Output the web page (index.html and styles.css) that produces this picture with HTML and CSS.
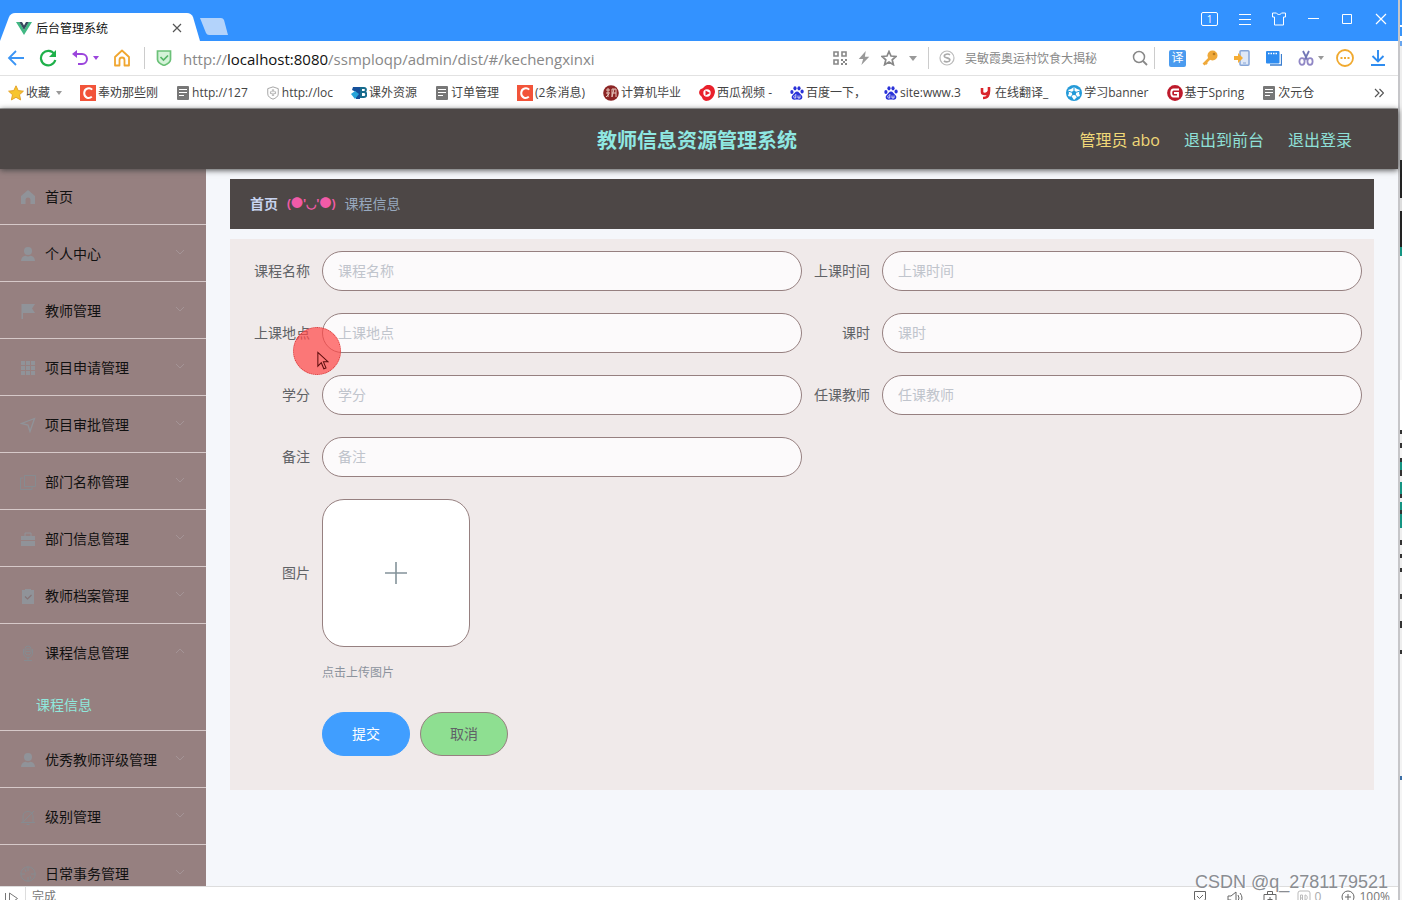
FILE: index.html
```html
<!DOCTYPE html>
<html lang="zh-CN">
<head>
<meta charset="utf-8">
<title>后台管理系统</title>
<link rel="stylesheet" href="styles.css">
</head>
<body>
<svg class="defs" aria-hidden="true">
  <symbol id="doc" viewBox="0 0 12 14"><rect width="12" height="14" rx="1" fill="#777"/><path d="M2 3.500h8M2 6.500h8M2 9.500h5" stroke="#fff" stroke-width="1.200"/></symbol>
  <symbol id="csdn" viewBox="0 0 16 16"><rect width="16" height="16" fill="#f2543a"/><path d="M12.200 4.600C10 2.400 4.500 2.600 4.200 8c0 5.200 5 6.200 7.600 3.600" fill="none" stroke="#fff" stroke-width="2"/></symbol>
  <symbol id="paw" viewBox="0 0 14 14"><g fill="#2a32d8"><ellipse cx="1.900" cy="6" rx="1.600" ry="2"/><ellipse cx="5" cy="2.300" rx="1.600" ry="2.100"/><ellipse cx="9" cy="2.300" rx="1.600" ry="2.100"/><ellipse cx="12.100" cy="5.600" rx="1.600" ry="2"/><path d="M7 5.500c2 0 2.500 2 4.300 3.500 2.200 2 .7 5-1.800 4.700-2-.3-3-.3-5 0C2 14 .6 11 2.700 9 4.500 7.500 5 5.500 7 5.500z"/></g><path d="M4.500 9.500c-1 0-1 2.500 0 2.500h1.300V8M8 9.500v2.500h2V9.500" fill="none" stroke="#fff" stroke-width=".8"/></symbol>
  <symbol id="down" viewBox="0 0 10 6"><path d="M1 1l4 4 4-4" fill="none" stroke="currentColor"/></symbol>
  <symbol id="up" viewBox="0 0 10 6"><path d="M1 5l4-4 4 4" fill="none" stroke="currentColor"/></symbol>
  <symbol id="user" viewBox="0 0 16 16"><circle cx="8" cy="5" r="4" fill="currentColor"/><path d="M1 15c0-3 2-5 4.500-5.200 1.500 1 3.500 1 5 0C13 10 15 12 15 15z" fill="currentColor"/></symbol>
</svg>
<div class="desktop">
<div class="browser">
  <div class="titlebar">
    <div class="tab">
      <svg class="tab-shape" viewBox="0 0 200 28" preserveAspectRatio="none"><path d="M0 28L9 4Q11 0 15 0H187Q191 0 193 4L200 28z" fill="#fff"/></svg>
      <svg class="i16" viewBox="0 0 16 14"><path d="M0 1h3.500L8 9l4.500-8H16L8 14z" fill="#41b883"/><path d="M3.300 1H6l2 3.500L10 1h2.700L8 9z" fill="#35495e"/></svg>
      <span>后台管理系统</span>
      <button class="icon-btn close" aria-label="关闭标签"><svg class="i10" viewBox="0 0 10 10"><path d="M1 1l8 8M9 1L1 9" stroke="#555" stroke-width="1.200"/></svg></button>
    </div>
    <button class="icon-btn" aria-label="新标签"><svg class="newtab" viewBox="0 0 28 17"><path d="M2 0h19q2 0 3 2l4 15H9q-2 0-3-2L0 0z" fill="#b3d3fb"/></svg></button>
    <div class="window-controls">
      <button class="icon-btn count" aria-label="窗口数">1</button>
      <button class="icon-btn" aria-label="菜单"><svg class="i14" viewBox="0 0 14 14"><path d="M1 2.500h12M1 7.500h12M1 12.500h12" stroke="#fff"/></svg></button>
      <button class="icon-btn" aria-label="皮肤"><svg class="i14" viewBox="0 0 14 14"><path d="M4.500 1H.5v4h2v8h9V5h2V1h-4C8.500 3 5.500 3 4.500 1z" fill="none" stroke="#fff"/></svg></button>
      <button class="icon-btn" aria-label="最小化"><svg class="i14" viewBox="0 0 14 14"><path d="M2 6.500h11" stroke="#fff"/></svg></button>
      <button class="icon-btn" aria-label="最大化"><svg class="i14" viewBox="0 0 14 14"><path d="M2.500 2.500h9v9h-9z" fill="none" stroke="#fff"/></svg></button>
      <button class="icon-btn" aria-label="关闭"><svg class="i14" viewBox="0 0 14 14"><path d="M2 2l10 10M12 2L2 12" stroke="#fff" stroke-width="1.200"/></svg></button>
    </div>
  </div>

  <div class="toolbar">
    <div class="nav">
      <button class="icon-btn" aria-label="后退"><svg class="i18" viewBox="0 0 18 18"><path d="M9 2L2 9l7 7M2 9h15" fill="none" stroke="#3b95f5" stroke-width="1.800"/></svg></button>
      <button class="icon-btn" aria-label="刷新"><svg class="i18" viewBox="0 0 18 18"><path d="M15.300 5A7.300 7.300 0 1 0 16.300 11" fill="none" stroke="#1fb04a" stroke-width="2.200"/><path d="M17 1v7h-7z" fill="#1fb04a"/></svg></button>
      <button class="icon-btn undo" aria-label="撤销"><svg class="i18" viewBox="0 0 18 18"><path d="M3 5h8a5 5 0 0 1 0 10H7" fill="none" stroke="#9b45dc" stroke-width="2"/><path d="M1 5l5-4v8z" fill="#9b45dc"/></svg><svg class="i6" viewBox="0 0 6 4"><path d="M0 0h6L3 4z" fill="#9b45dc"/></svg></button>
      <button class="icon-btn" aria-label="主页"><svg class="i18" viewBox="0 0 18 18"><path d="M2 8l7-6.500L16 8v8.500h-4.500V11a2.500 2.500 0 0 0-5 0v5.500H2z" fill="none" stroke="#f0a630" stroke-width="1.800" stroke-linejoin="round"/></svg></button>
    </div>
    <svg class="i16 shield" viewBox="0 0 16 16"><path d="M1.500 1h13v8.500c0 3-3 4.500-6.500 6-3.500-1.500-6.500-3-6.500-6z" fill="#d5f3d9" stroke="#6bc178" stroke-width="1.700"/><path d="M4.500 7L7.500 10l4.500-4.500" fill="none" stroke="#55b566" stroke-width="1.700"/></svg>
    <div class="url">http://<b>localhost:8080</b>/ssmploqp/admin/dist/#/kechengxinxi</div>
    <div class="url-tools">
      <button class="icon-btn" aria-label="二维码"><svg class="i14" viewBox="0 0 14 14"><path d="M1 1h4v4H1zM9 1h4v4H9zM1 9h4v4H1z" fill="none" stroke="#888" stroke-width="1.600"/><path d="M8 8h2v2H8zM12 8h2v2h-2zM10 10h2v2h-2zM8 12h2v2H8zM12 12h2v2h-2z" fill="#888"/></svg></button>
      <button class="icon-btn" aria-label="极速"><svg class="i14" viewBox="0 0 14 16"><path d="M9 0L1 9h5l-2 7 9-9.500H8z" fill="#999"/></svg></button>
      <button class="icon-btn" aria-label="收藏网页"><svg class="i16" viewBox="0 0 16 16"><path d="M8 1.500l2 4.500 5 .5-3.800 3.300 1.200 4.900L8 12.100l-4.400 2.600 1.200-4.900L1 6.500 6 6z" fill="none" stroke="#888" stroke-width="1.700"/></svg></button>
      <button class="icon-btn" aria-label="更多"><svg class="i8" viewBox="0 0 8 5"><path d="M0 0h8L4 5z" fill="#999"/></svg></button>
    </div>
    <label class="search">
      <svg class="i16" viewBox="0 0 16 16"><circle cx="8" cy="8" r="7" fill="none" stroke="#bbb" stroke-width="1.200"/><path d="M11 4.800C9 3.400 5 4 5.300 6.300 5.600 8.300 11 7.500 10.900 10c-.2 2-4 2.500-6 1" fill="none" stroke="#aaa" stroke-width="1.600"/></svg>
      <input type="text" aria-label="搜索" placeholder="吴敏霞奥运村饮食大揭秘">
      <svg class="i16" viewBox="0 0 16 16"><circle cx="7" cy="7" r="5.500" fill="none" stroke="#888" stroke-width="1.500"/><path d="M11 11l4 4" stroke="#888" stroke-width="1.800"/></svg>
    </label>
    <div class="extensions">
      <button class="icon-btn translate" aria-label="翻译">译</button>
      <button class="icon-btn" aria-label="密码"><svg class="i16" viewBox="0 0 16 16"><path d="M9 7l-7.500 7.500M3 12l2 2" stroke="#efa93a" stroke-width="2.600"/><circle cx="10.500" cy="5.500" r="5" fill="#efa93a"/><circle cx="12" cy="4" r="1.300" fill="#b97a1f"/></svg></button>
      <button class="icon-btn" aria-label="手机"><svg class="i16" viewBox="0 0 16 16"><rect x="6" y=".8" width="9" height="14.400" rx="1" fill="#dfe8f7" stroke="#86a5d8" stroke-width="1.500"/><path d="M9 13h3" stroke="#86a5d8"/><path d="M0 6h4V3l5 5-5 5v-3H0z" fill="#f5ad35"/></svg></button>
      <button class="icon-btn" aria-label="窗口"><svg class="i16" viewBox="0 0 16 16"><path d="M4 15h11.500V4" fill="none" stroke="#3b7fd0" stroke-width="1.300"/><rect y="1" width="13.500" height="12.500" rx="1" fill="#2e8cf0"/><path d="M2 3.500h9" stroke="#fff" stroke-width="1.300" stroke-dasharray="1.500 1"/></svg></button>
      <button class="icon-btn snip" aria-label="截图"><svg class="i16" viewBox="0 0 16 16"><path d="M5 1l4.500 9M11 1L6.500 10" stroke="#7277b5" stroke-width="1.800"/><ellipse cx="4" cy="11.500" rx="2.600" ry="3.300" fill="none" stroke="#9087c5" stroke-width="1.800"/><ellipse cx="12" cy="11.500" rx="2.600" ry="3.300" fill="none" stroke="#9087c5" stroke-width="1.800"/></svg><svg class="i6" viewBox="0 0 6 4"><path d="M0 0h6L3 4z" fill="#999"/></svg></button>
      <button class="icon-btn" aria-label="更多扩展"><svg class="i18" viewBox="0 0 18 18"><circle cx="9" cy="9" r="8" fill="none" stroke="#f0a92e" stroke-width="1.800"/><path d="M4.500 9h2M8 9h2M11.500 9h2" stroke="#f0a92e" stroke-width="2"/></svg></button>
      <button class="icon-btn" aria-label="下载"><svg class="i16" viewBox="0 0 16 16"><path d="M8 0v11M2.500 6L8 11.500 13.500 6M1 15h14" fill="none" stroke="#2e8cf0" stroke-width="1.900"/></svg></button>
    </div>
  </div>

  <nav class="bookmarks" aria-label="书签">
    <a href="#"><svg class="i16" viewBox="0 0 16 16"><path d="M8 .8l2.200 4.800 5.200.6-3.900 3.500 1.100 5.200L8 12.300l-4.600 2.600 1.100-5.200L.6 6.200l5.200-.6z" fill="#f7c52e" stroke="#e4a32a"/></svg>收藏<svg class="i6 caret" viewBox="0 0 6 4"><path d="M0 0h6L3 4z" fill="#999"/></svg></a>
    <a href="#"><svg class="i16"><use href="#csdn"/></svg>奉劝那些刚</a>
    <a href="#"><svg class="i14"><use href="#doc"/></svg>http://127</a>
    <a href="#"><svg class="i14" viewBox="0 0 14 16"><path d="M7 1l6 2v6c0 3-3 5-6 6-3-1-6-3-6-6V3z" fill="none" stroke="#999"/><path d="M7 4v7M3.500 7.500h7" stroke="#aaa" stroke-width="2.600"/><path d="M7 5v5M4.500 7.500h5" stroke="#fff"/></svg>http://loc</a>
    <a href="#"><svg class="i16" viewBox="0 0 16 16"><path d="M2 2h7v12H5V7L1 5z" fill="#15509b"/><path d="M0 9l4-3 4 3-4 5z" fill="#27a4d9"/><path d="M10 3h3c3 0 2 4 0 4h-2 2c3 0 3 5 0 5h-3z" fill="none" stroke="#176b8c" stroke-width="2"/></svg>课外资源</a>
    <a href="#"><svg class="i14"><use href="#doc"/></svg>订单管理</a>
    <a href="#"><svg class="i16"><use href="#csdn"/></svg>(2条消息)</a>
    <a href="#"><svg class="i16" viewBox="0 0 16 16"><circle cx="8" cy="8" r="7.800" fill="#8c2525"/><path d="M3 5h4M5 3v9M3 8h4M3 12l3-3M9 4h4v8M9 4v8M9 8h4M11 4l-2 8" fill="none" stroke="#e6c7bd"/></svg>计算机毕业</a>
    <a href="#"><svg class="i16" viewBox="0 0 16 16"><path d="M8 0c5-1 8 3 8 7-1 6-5 9-9 9-4-1-3-3-5-5-3-2-2-6 0-7 2 0 3-3 6-4z" fill="#e9212b"/><circle cx="8" cy="8" r="3.700" fill="#fff"/><path d="M6.500 5.500L11 8l-4.500 2.500z" fill="#e9212b"/></svg>西瓜视频 -</a>
    <a href="#"><svg class="i14"><use href="#paw"/></svg>百度一下，</a>
    <a href="#"><svg class="i14"><use href="#paw"/></svg>site:www.3</a>
    <a href="#"><svg class="i14" viewBox="0 0 14 14"><path d="M3 2v4q0 2 3 2t4-3V1M10 4c0 5-1 8-6 8" fill="none" stroke="#d9252b" stroke-width="2.600"/></svg>在线翻译_</a>
    <a href="#"><svg class="i16" viewBox="0 0 16 16"><circle cx="8" cy="8" r="8" fill="#249ad8"/><path d="M8 2l3 2 3 1-1 3 1 3-3 1-3 3-2-3-4-1 1-3-1-3 3-1z" fill="#fff"/><path d="M8 8V2M8 8l6-2M8 8l4 5M8 8l-4 5M8 8L2 6" stroke="#249ad8"/><circle cx="8" cy="8" r="2.200" fill="#249ad8"/></svg>学习banner</a>
    <a href="#"><svg class="i16" viewBox="0 0 16 16"><circle cx="8" cy="8" r="7.900" fill="#be1a2b"/><path d="M12 4.500H6.500c-3 0-3 7 0 7H11V8H7" fill="none" stroke="#fff" stroke-width="1.900"/></svg>基于Spring</a>
    <a href="#"><svg class="i14"><use href="#doc"/></svg>次元仓</a>
    <button class="icon-btn more" aria-label="更多书签"><svg class="i10" viewBox="0 0 10 10"><path d="M1 1l4 4-4 4M5.500 1l4 4-4 4" fill="none" stroke="#555" stroke-width="1.200"/></svg></button>
  </nav>

  <header class="app-header">
    <h1>教师信息资源管理系统</h1>
    <div class="account"><span>管理员 abo</span><a href="#">退出到前台</a><a href="#">退出登录</a></div>
  </header>

  <div class="app-body">
    <nav class="sidebar" aria-label="主菜单">
      <ul>
        <li><a href="#"><svg class="i16" viewBox="0 0 16 16"><path d="M8 1l7 6v8h-4.500v-4a2.500 2.500 0 0 0-5 0v4H1V7z" fill="currentColor"/></svg>首页</a></li>
        <li><a href="#"><svg class="i16"><use href="#user"/></svg>个人中心<svg class="arrow"><use href="#down"/></svg></a></li>
        <li><a href="#"><svg class="i16" viewBox="0 0 16 16"><path d="M1.500 1H15l-3 4.500 3 4.500H3v6H1.500z" fill="currentColor"/></svg>教师管理<svg class="arrow"><use href="#down"/></svg></a></li>
        <li><a href="#"><svg class="i16" viewBox="0 0 16 16"><path d="M1 1h4v4H1zM6 1h4v4H6zM11 1h4v4h-4zM1 6h4v4H1zM6 6h4v4H6zM11 6h4v4h-4zM1 11h4v4H1zM6 11h4v4H6zM11 11h4v4h-4z" fill="currentColor"/></svg>项目申请管理<svg class="arrow"><use href="#down"/></svg></a></li>
        <li><a href="#"><svg class="i16" viewBox="0 0 16 16"><path d="M1.500 6.500L14.500 1.500 10 14.500 8 8z" fill="none" stroke="currentColor" stroke-width="1.300"/></svg>项目审批管理<svg class="arrow"><use href="#down"/></svg></a></li>
        <li><a href="#"><svg class="i16 thin" viewBox="0 0 16 16"><path d="M4.500 1.500h11v11h-11zM3 4H.5v11.500H12V13" fill="none" stroke="currentColor"/></svg>部门名称管理<svg class="arrow"><use href="#down"/></svg></a></li>
        <li><a href="#"><svg class="i16" viewBox="0 0 16 16"><path d="M1 5h14v4H1zM1 10h14v5H1z" fill="currentColor"/><path d="M5 5V2h6v3" fill="none" stroke="currentColor"/></svg>部门信息管理<svg class="arrow"><use href="#down"/></svg></a></li>
        <li><a href="#"><svg class="i16" viewBox="0 0 16 16"><path d="M2 2h3V1h6v1h3v14H2z" fill="currentColor"/><path d="M5 8.500l2.500 2.500 4-4" fill="none" stroke="#857476" stroke-width="1.200"/></svg>教师档案管理<svg class="arrow"><use href="#down"/></svg></a></li>
        <li><a href="#" aria-expanded="true"><svg class="i16 thin" viewBox="0 0 16 16"><rect x="5" y="1" width="6" height="9" rx="3" fill="none" stroke="currentColor"/><path d="M3.500 4v4c0 6 9 6 9 0V4M8 12.500V15M4 15.500h8M6 4h4M6 6.500h4" fill="none" stroke="currentColor"/></svg>课程信息管理<svg class="arrow"><use href="#up"/></svg></a>
          <a class="sub" href="#">课程信息</a></li>
        <li><a href="#"><svg class="i16"><use href="#user"/></svg>优秀教师评级管理<svg class="arrow"><use href="#down"/></svg></a></li>
        <li><a href="#"><svg class="i16 thin" viewBox="0 0 16 16"><path d="M3 13V7c0-6 10-6 10 0v6M1 13.500h14M2 14L14 2M6.500 15.500h3" fill="none" stroke="currentColor"/></svg>级别管理<svg class="arrow"><use href="#down"/></svg></a></li>
        <li><a href="#"><svg class="i16 thin" viewBox="0 0 16 16"><circle cx="8" cy="8" r="7.200" fill="none" stroke="currentColor"/><path d="M8 1v4M8 11v4M1 8h4M11 8h4M5 3l1 3M11 13l-1-3" stroke="currentColor"/></svg>日常事务管理<svg class="arrow"><use href="#down"/></svg></a></li>
      </ul>
    </nav>

    <main class="content">
      <div class="breadcrumb"><a href="#">首页</a><span class="face">(●'◡'●)</span><span>课程信息</span></div>
      <form class="card">
        <div class="field"><label for="name">课程名称</label><input id="name" type="text" placeholder="课程名称"></div>
        <div class="field"><label for="time">上课时间</label><input id="time" type="text" placeholder="上课时间"></div>
        <div class="field"><label for="place">上课地点</label><input id="place" type="text" placeholder="上课地点"></div>
        <div class="field"><label for="hours">课时</label><input id="hours" type="text" placeholder="课时"></div>
        <div class="field"><label for="credit">学分</label><input id="credit" type="text" placeholder="学分"></div>
        <div class="field"><label for="teacher">任课教师</label><input id="teacher" type="text" placeholder="任课教师"></div>
        <div class="field"><label for="note">备注</label><input id="note" type="text" placeholder="备注"></div>
        <div class="field wide"><label for="upload">图片</label><button class="upload" id="upload" type="button"><svg viewBox="0 0 24 24"><path d="M12 1v22M1 12h22" stroke="#84939a" stroke-width="1.600"/></svg></button></div>
        <p class="tip">点击上传图片</p>
        <div class="actions"><button class="btn primary" type="button">提交</button><button class="btn cancel" type="button">取消</button></div>
      </form>
    </main>
  </div>

  <footer class="statusbar">
    <svg class="i16" viewBox="0 0 16 16"><path d="M1.500 3v11M5.500 3v11l8-5.500z" fill="none" stroke="#777"/></svg>
    <span class="done">完成</span>
    <div class="status-tools">
      <svg class="i14" viewBox="0 0 14 14"><path d="M1.500 1.500h11v8L7 13 1.500 9.500z" fill="none" stroke="#666"/><path d="M4 6l2.500 2.500L10 5" fill="none" stroke="#666"/></svg>
      <svg class="i16" viewBox="0 0 16 14"><path d="M1 5h3l5-4v12L4 9H1zM11 4q2 3 0 6M13 2q4 5 0 10" fill="none" stroke="#666"/></svg>
      <svg class="i14" viewBox="0 0 14 14"><path d="M1 4.500h12v9H1zM4.500 4V1.500h5V4M7 7v5M4.500 9.500h5" fill="none" stroke="#666"/></svg>
      <span class="ads"><svg class="i14" viewBox="0 0 14 14"><rect x="1" y="1" width="12" height="12" rx="2" fill="none" stroke="#bbb"/><path d="M3.500 10V5h2v5M3.500 8h2M8 5v5c3 0 3-5 0-5" fill="none" stroke="#bbb"/></svg>0</span>
      <span><svg class="i14" viewBox="0 0 14 14"><circle cx="7" cy="7" r="6" fill="none" stroke="#666"/><path d="M7 4v6M4 7h6" stroke="#666"/></svg>100%</span>
    </div>
  </footer>
</div>
<div class="edge"></div>
</div>
<div class="pointer"><svg viewBox="0 0 14 22"><path d="M1 1v16l4-4 3 7 2.500-1-3-7H13z" fill="none" stroke="#5c0d0d" stroke-width="1.200"/></svg></div>
<div class="watermark">CSDN @q_2781179521</div>
</body>
</html>
```
FILE: styles.css
```css
* { box-sizing: border-box; }
body { margin: 0; overflow: hidden; font: 14px/20px "Open Sans", "Noto Sans CJK SC", sans-serif; color: #333; }
a { color: inherit; text-decoration: none; }
svg { display: block; flex: none; }
button, input { font: inherit; }
.defs { position: absolute; width: 0; height: 0; }
.icon-btn { display: flex; align-items: center; justify-content: center; padding: 0; border: 0; background: none; }
.i6 { width: 6px; height: 4px; }
.i8 { width: 8px; height: 5px; }
.i10 { width: 10px; height: 10px; }
.i14 { width: 14px; height: 14px; }
.i16 { width: 16px; height: 16px; }
.i18 { width: 18px; height: 18px; }

.desktop { display: flex; height: 100vh; }
.browser { flex: 1; min-width: 0; display: flex; flex-direction: column; background: #fff; }
.edge {
  width: 4px;
  border-left: 2px solid #c6c6c9;
  background: linear-gradient(#3894f8 0 25px, #fff 25px 27px, #3894f8 27px 36px, #fff 36px 41px, #68a5ee 41px 46px, #eee 46px 160px, #222 160px 198px, #ddd 198px 211px, #222 211px 247px, #159482 247px 256px, #f5f5f5 256px 380px, #fff 380px 430px, #333 430px 434px, #eee 434px 443px, #333 443px 448px, #f5f5f5 448px 458px, #333 458px 462px, #159482 462px 470px, #333 470px 476px, #eee 476px 482px, #159482 482px 494px, #333 494px 498px, #eee 498px 502px, #159482 502px 510px, #333 510px 514px, #159482 514px 528px, #eee 528px 540px, #333 540px 545px, #eee 545px 554px, #333 554px 558px, #eee 558px 568px, #333 568px 572px, #eee 572px 594px, #333 594px 599px, #eee 599px 621px, #333 621px 628px, #eee 628px 650px, #333 650px 654px, #f3f3f3 654px 776px, #3b6ea5 776px 780px, #f5f5f5 780px);
}

.titlebar { flex: none; display: flex; height: 41px; background: #3392ff; }
.tab { position: relative; display: flex; align-items: center; gap: 4px; width: 200px; height: 28px; margin-top: 13px; padding: 2px 18px 0 16px; font-size: 12px; line-height: 16px; color: #111; }
.tab > * { position: relative; }
.tab span { padding-top: 2px; }
.tab .tab-shape { position: absolute; inset: 0; width: 100%; height: 100%; }
.close { margin-left: auto; }
.newtab { width: 28px; height: 17px; margin-top: 12px; }
.window-controls { display: flex; align-items: center; gap: 20px; height: 38px; margin-left: auto; padding-right: 10px; }
.count { width: 17px; height: 14px; border: 1px solid #fff; border-radius: 2px; color: #fff; font-size: 10px; line-height: 12px; }

.toolbar { flex: none; display: flex; align-items: center; height: 35px; border-bottom: 1px solid #e2e2e2; padding: 0 12px 0 7px; }
.nav { display: flex; align-items: center; gap: 14px; height: 22px; padding-right: 13px; border-right: 1px solid #ccc; }
.undo, .snip { gap: 4px; }
.shield { margin: 0 11px; }
.url { flex: 1; padding-top: 1px; font-size: 15px; color: #888; white-space: nowrap; }
.url b { font-weight: 400; color: #111; }
.url-tools { display: flex; align-items: center; gap: 10px; padding-right: 11px; }
.url-tools button:last-child { margin-left: 2px; }
.search { display: flex; align-items: center; gap: 10px; width: 227px; height: 22px; padding: 0 6px 0 10px; border: solid #ccc; border-width: 0 1px; }
.search input { flex: 1; min-width: 0; padding: 2px 0 0; border: 0; background: none; font-size: 12px; }
.search input::placeholder { color: #888; }
.extensions { display: flex; align-items: center; gap: 16px; padding-left: 14px; }
.snip { margin-right: -4px; }
.translate { width: 17px; height: 17px; border-radius: 2px; background: #4a9bef; color: #fff; font-size: 12px; line-height: 16px; }

.bookmarks { flex: none; display: flex; align-items: center; gap: 18px; height: 33px; padding: 1px 14px 0 8px; border-bottom: 1px solid #aaa; font-size: 12px; color: #444; white-space: nowrap; }
.bookmarks a { display: flex; align-items: center; gap: 2px; }
.caret { margin-left: 4px; }
.more { margin-left: auto; }

.app-header { position: relative; flex: none; display: grid; grid-template-columns: 1fr auto 1fr; align-items: center; height: 60px; padding: 0 46px 0 42px; background: #4d4746; box-shadow: 0 1px 6px #444; }
.app-header h1 { grid-column: 2; margin: 0; padding-top: 4px; font-size: 20px; line-height: 28px; color: #8fe8e2; }
.account { display: flex; justify-content: flex-end; gap: 24px; padding-top: 1px; font-size: 16px; line-height: 24px; color: #8fe0d8; }
.account span { color: #f0d878; }

.app-body { flex: 1; min-height: 0; display: flex; background: #f5f7fb; }
.sidebar { flex: none; width: 206px; overflow: hidden; background: #968080; color: #111; }
.sidebar ul { margin: -1px 0 0; padding: 0; list-style: none; }
.sidebar li { border-bottom: 1px solid #d6c9c9; }
.sidebar a { display: flex; align-items: center; gap: 9px; height: 56px; padding: 2px 20px 0; }
.sidebar .i16 { color: #909399; }
.sidebar .thin { color: #868b90; }
.sidebar .arrow { width: 10px; height: 6px; margin: 0 1px 4px auto; color: #a49496; }
.sidebar a.sub { height: 50px; padding: 0 20px 0 36px; color: #8fe8dc; }

.content { flex: 1; min-width: 0; padding: 10px 24px; overflow: hidden; }
.breadcrumb { display: flex; align-items: center; gap: 9px; height: 50px; padding: 0 20px; background: #4d4746; color: #97a8be; }
.breadcrumb a { font-weight: 700; color: #c7d3f0; }
.face { font-size: 12px; font-weight: 700; color: #f15ba8; }
.card { display: grid; grid-template-columns: 1fr 1fr; row-gap: 22px; margin-top: 10px; padding: 12px 12px 34px; background: #f0eaea; }
.field { display: flex; align-items: center; }
.field label { flex: none; width: 80px; padding-right: 12px; text-align: right; color: #606266; }
.field input { flex: 1; min-width: 0; height: 40px; padding: 0 15px 2px; border: 1px solid #968080; border-radius: 20px; background: #fcfafb; }
.field input::placeholder { color: #c0c4cc; }
.wide, .tip, .actions { grid-column: 1 / -1; }
.upload { display: flex; align-items: center; justify-content: center; width: 148px; height: 148px; padding: 0; border: 1px solid #968080; border-radius: 22px; background: #fff; }
.upload svg { width: 24px; height: 24px; }
.tip { margin: -6px 0 7px 80px; font-size: 12px; line-height: 20px; color: #8c939d; }
.actions { display: flex; gap: 10px; margin-left: 80px; }
.btn { width: 88px; height: 44px; padding: 0; border-radius: 22px; border: 1px solid #409eff; background: #409eff; color: #fff; }
.btn.cancel { border-color: #968080; background: #8edf91; color: #606266; }

.statusbar { flex: none; display: flex; align-items: flex-start; height: 14px; padding: 0 8px 0 4px; overflow: hidden; border-top: 1px solid #ddd; font-size: 12px; line-height: 20px; color: #777; }
.statusbar svg { margin-top: 3px; }
.done { margin-left: 5px; padding-left: 6px; border-left: 1px solid #ddd; }
.status-tools { display: flex; gap: 20px; margin-left: auto; }
.status-tools span { display: flex; gap: 4px; }
.ads { color: #aaa; }

.pointer { position: absolute; left: 293px; top: 327px; width: 48px; height: 48px; padding: 23px 0 0 23px; border: 1px dotted #d23c3c; border-radius: 50%; background: rgba(255, 70, 70, .7); }
.pointer svg { width: 12px; height: 20px; }
.watermark { position: absolute; right: 14px; bottom: 8px; font: 18px/20px "Liberation Sans", sans-serif; color: #8a8d92; text-shadow: 1px 1px #fff; }
```
